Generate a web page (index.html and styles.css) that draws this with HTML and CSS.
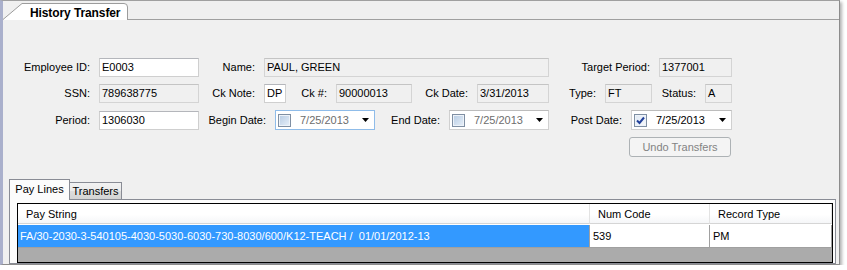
FILE: index.html
```html
<!DOCTYPE html>
<html>
<head>
  <title>History Transfer</title>
  <meta charset="utf-8">
  <link rel="stylesheet" href="styles.css">
</head>
<body>
  <div class="window">
    <div class="tabstrip">
      <div class="doc-tab">
        <svg class="doc-tab-shape" width="126" height="17" viewBox="0 0 126 17">
          <path d="M0 16.5 L19 0.5 H121 Q124.5 0.5 124.5 4 V17 H0 Z" fill="#fff" stroke="none"/>
          <path d="M0 16.5 L19 0.5 H121 Q124.5 0.5 124.5 4 V17" fill="none" stroke="#9c9c9c"/>
        </svg>
        <span class="doc-tab-text">History Transfer</span>
      </div>
    </div>

    <div class="panel">
      <!-- employee / check details -->
      <div class="form">
        <div class="row">
          <span class="lbl w89">Employee ID:</span>
          <div class="box w100">E0003</div>
          <span class="lbl w65">Name:</span>
          <div class="box off w285">PAUL, GREEN</div>
          <span class="lbl w110">Target Period:</span>
          <div class="box off w73">1377001</div>
        </div>

        <div class="row">
          <span class="lbl w89">SSN:</span>
          <div class="box off w100">789638775</div>
          <span class="lbl w65">Ck Note:</span>
          <div class="box w22">DP</div>
          <span class="lbl w50">Ck #:</span>
          <div class="box off w76">90000013</div>
          <span class="lbl w65">Ck Date:</span>
          <div class="box off w72">3/31/2013</div>
          <span class="lbl w56">Type:</span>
          <div class="box off w47">FT</div>
          <span class="lbl w53">Status:</span>
          <div class="box off w27">A</div>
        </div>

        <div class="row tall">
          <span class="lbl w89">Period:</span>
          <div class="box w100">1306030</div>
          <span class="lbl w76">Begin Date:</span>
          <div class="picker focus w100">
            <span class="check"></span>
            <span class="date muted">7/25/2013</span>
            <svg class="arrow" width="7" height="4" viewBox="0 0 7 4"><path d="M0 0 H7 L3.5 4 Z" fill="#000"/></svg>
          </div>
          <span class="lbl w74">End Date:</span>
          <div class="picker w100">
            <span class="check"></span>
            <span class="date muted">7/25/2013</span>
            <svg class="arrow" width="7" height="4" viewBox="0 0 7 4"><path d="M0 0 H7 L3.5 4 Z" fill="#000"/></svg>
          </div>
          <span class="lbl w82">Post Date:</span>
          <div class="picker w101">
            <span class="check on">
              <svg width="11" height="11" viewBox="0 0 11 11"><path d="M2 5.5 L4.5 8 L9 2.5" fill="none" stroke="#21409a" stroke-width="2"/></svg>
            </span>
            <span class="date">7/25/2013</span>
            <svg class="arrow" width="7" height="4" viewBox="0 0 7 4"><path d="M0 0 H7 L3.5 4 Z" fill="#000"/></svg>
          </div>
        </div>

        <div class="actions">
          <button class="btn" disabled>Undo Transfers</button>
        </div>
      </div>

      <!-- pay lines / transfers -->
      <div class="subtabs">
        <div class="subtab-head">
          <div class="subtab active">Pay Lines</div>
          <div class="subtab">Transfers</div>
        </div>
        <div class="subtab-page">
          <div class="grid">
            <div class="grid-head">
              <div class="hcell">Pay String</div>
              <div class="hcell">Num Code</div>
              <div class="hcell">Record Type</div>
            </div>
            <div class="grid-row">
              <div class="cell first selected">FA/30-2030-3-540105-4030-5030-6030-730-8030/600/K12-TEACH /&nbsp; 01/01/2012-13</div>
              <div class="cell">539</div>
              <div class="cell">PM</div>
            </div>
          </div>
        </div>
      </div>
    </div>
  </div>
</body>
</html>
```

FILE: styles.css
```css
body {
  margin: 0;
  padding: 0;
  background: #fff;
  font-family: "Liberation Sans", Arial, sans-serif;
  font-size: 11px;
  color: #000;
  overflow: hidden;
}

.window {
  width: 840px;
  height: 265px;
  box-sizing: border-box;
  border-top: 1px solid #a0a0a0;
  border-right: 1px solid #8c8c8c;
  border-bottom: 1px solid #8c8c8c;
  border-left: 3px solid #aab0cc;
  background: #f0f0f0;
  box-shadow: 2px 2px 3px rgba(0, 0, 0, 0.3);
  display: flex;
  flex-direction: column;
  overflow: hidden;
}

/* document tab on top */
.tabstrip {
  height: 19px;
  box-sizing: border-box;
  border-bottom: 1px solid #a0a0a0;
  display: flex;
}
.doc-tab {
  position: relative;
  width: 126px;
  height: 17px;
  margin-top: 2px;
  overflow: hidden;
}
.doc-tab-shape {
  position: absolute;
  left: 0;
  top: 0;
}
.doc-tab-text {
  position: relative;
  display: block;
  padding: 3px 0 0 27px;
  line-height: 14px;
  font-size: 12px;
  font-weight: bold;
  letter-spacing: -0.1px;
}

.panel {
  flex: 1;
  display: flex;
  flex-direction: column;
  min-height: 0;
}

.form {
  padding: 38px 0 0 7px;
}
.row {
  display: flex;
  align-items: center;
  height: 19px;
  margin-bottom: 7px;
}
.row.tall {
  height: 20px;
}

.lbl {
  box-sizing: border-box;
  padding-right: 9px;
  text-align: right;
  white-space: nowrap;
  line-height: 19px;
}

.box {
  box-sizing: border-box;
  height: 19px;
  padding: 0 2px;
  line-height: 17px;
  border: 1px solid #cfcfcf;
  border-top-color: #b4b6bb;
  background: #fff;
  white-space: nowrap;
  overflow: hidden;
}
.box.off {
  background: #f0f0f0;
  border-color: #d4d4d4;
  border-top-color: #c4c4c4;
}

.w22 { width: 22px; }
.w27 { width: 27px; }
.w47 { width: 47px; }
.w50 { width: 50px; }
.w53 { width: 53px; }
.w56 { width: 56px; }
.w65 { width: 65px; }
.w72 { width: 72px; }
.w73 { width: 73px; }
.w74 { width: 74px; }
.w76 { width: 76px; }
.w82 { width: 82px; }
.w89 { width: 89px; }
.w100 { width: 100px; }
.w101 { width: 101px; }
.w110 { width: 110px; }
.w285 { width: 285px; }

/* date pickers */
.picker {
  box-sizing: border-box;
  height: 20px;
  display: flex;
  align-items: center;
  border: 1px solid #d0d0d0;
  border-top-color: #bcbcbc;
  background: #fff;
}
.picker.focus {
  border-color: #8fbce9;
}
.check {
  box-sizing: border-box;
  width: 13px;
  height: 13px;
  margin-left: 2px;
  border: 1px solid #7f8fa3;
  box-shadow: inset 0 0 0 1px #eef3f9;
  background: linear-gradient(135deg, #b6cbe3, #e8f0f9);
  display: flex;
}
.check.on {
  background: linear-gradient(135deg, #dfe8f3, #f7f9fc);
}
.date {
  margin-left: 9px;
}
.date.muted {
  color: #6d6d6d;
}
.arrow {
  margin-left: auto;
  margin-right: 5px;
}

.actions {
  display: flex;
  padding-left: 619px;
}
.btn {
  width: 102px;
  height: 20px;
  padding: 0;
  border: 1px solid #adb2b5;
  border-radius: 3px;
  background: #f4f4f4;
  color: #838383;
  font-family: "Liberation Sans", Arial, sans-serif;
  font-size: 11px;
}

/* lower tabs */
.subtabs {
  flex: 1;
  display: flex;
  flex-direction: column;
  margin: 22px 3px 0 6px;
  min-height: 0;
}
.subtab-head {
  display: flex;
  align-items: flex-end;
}
.subtab {
  position: relative;
  box-sizing: border-box;
  height: 17px;
  width: 52px;
  border: 1px solid #898c95;
  border-left: none;
  border-bottom: none;
  background: linear-gradient(#f2f2f2, #ebebeb 50%, #dddddd 51%, #d4d4d4);
  text-align: center;
  line-height: 16px;
}
.subtab.active {
  width: 61px;
  height: 21px;
  margin-bottom: -1px;
  border-left: 1px solid #898c95;
  background: #fcfcfc;
  line-height: 19px;
  z-index: 1;
}
.subtab-page {
  flex: 1;
  display: flex;
  flex-direction: column;
  border: 1px solid #898c95;
  background: #fcfcfc;
  padding: 3px 2px 0 7px;
}

/* data grid */
.grid {
  flex: 1;
  border: 1px solid #000;
  background: #ababab;
}
.grid-head {
  display: grid;
  grid-template-columns: 572px 120px 1fr;
  height: 21px;
  box-sizing: border-box;
  background: #fff;
  border-bottom: 1px solid #fff;
}
.hcell {
  box-sizing: border-box;
  padding: 3px 0 0 8px;
  line-height: 15px;
  border-right: 1px solid #e3e3e3;
  border-bottom: 1px solid #d5d5d5;
  background: linear-gradient(#fff, #fff 55%, #f5f6f8);
}
.grid-row {
  display: grid;
  grid-template-columns: 572px 120px 1fr;
  height: 23px;
  box-sizing: border-box;
  background: #fff;
  border-bottom: 1px solid #a0a0a0;
}
.cell {
  box-sizing: border-box;
  padding-left: 3px;
  line-height: 22px;
  border-right: 1px solid #a0a0a0;
  white-space: nowrap;
  overflow: hidden;
}
.cell.first {
  padding-left: 2px;
}
.cell.selected {
  background: #3399ff;
  color: #fff;
}
```
